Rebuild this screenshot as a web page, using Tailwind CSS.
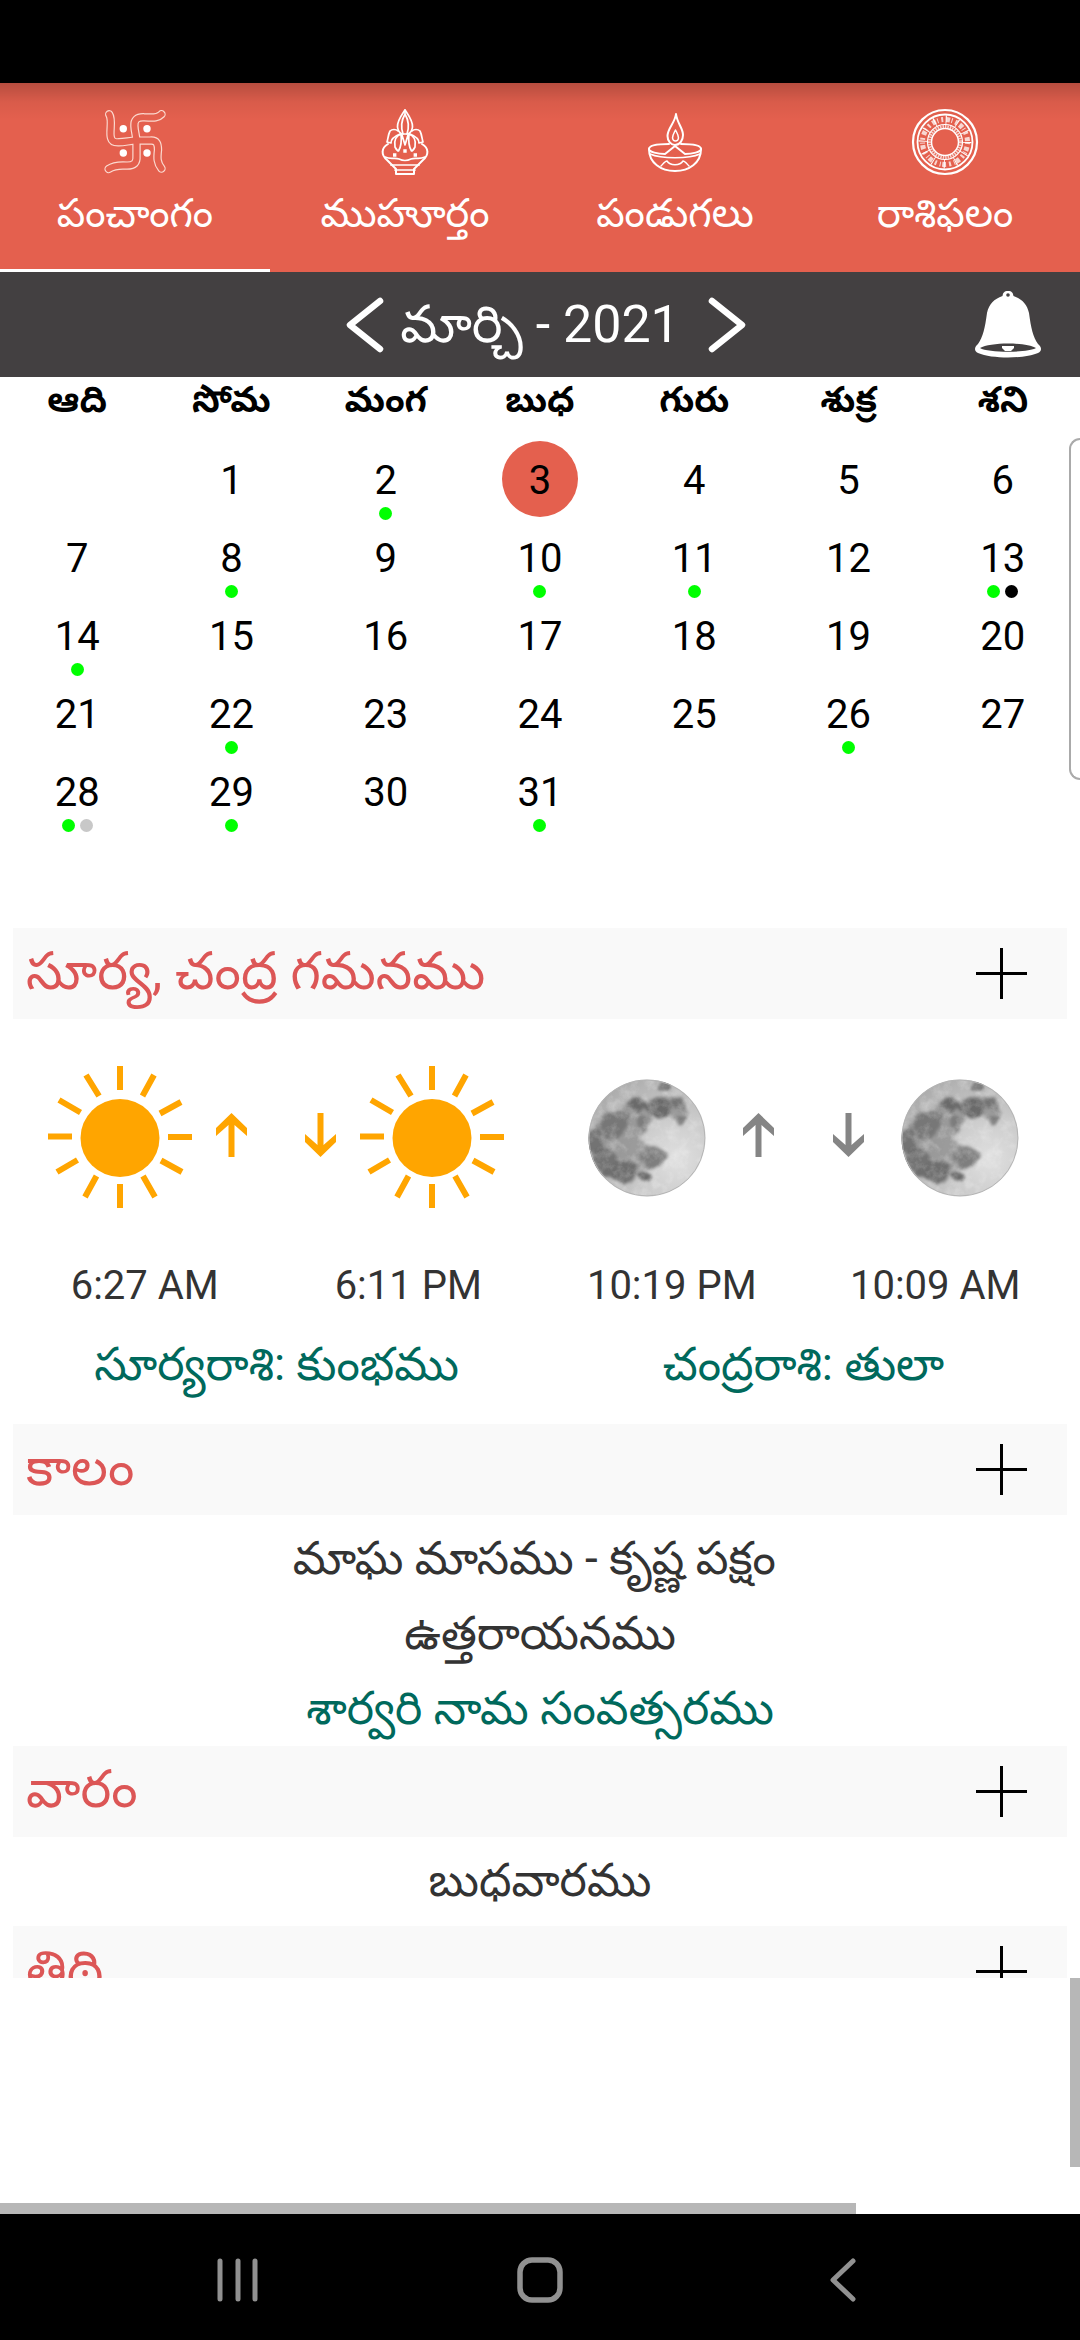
<!DOCTYPE html>
<html lang="te">

<head>
  <meta charset="UTF-8" />
  <meta name="viewport" content="width=device-width, initial-scale=1.0">
  <title>పంచాంగం</title>
  <script src="https://cdn.jsdelivr.net/npm/@tailwindcss/browser@4"></script>
</head>

<body class="relative min-h-screen flex flex-col bg-white text-black text-[40px] font-[Roboto,'Noto_Sans_Telugu','Noto_Sans',sans-serif]">
  <!-- status bar -->
  <div class="h-[83px] bg-black"></div>

  <!-- tabs -->
  <nav class="grid grid-cols-4 bg-[#e4604e] bg-linear-to-b from-black/20 via-black/5 via-10% to-transparent to-20% text-white leading-[56px]">
    <a href="#" class="flex flex-col items-center h-[189px] pt-[23px] border-b-[3px] border-white">
      <svg class="h-[71px] w-[70px]" viewBox="0 0 70 71" fill="none" stroke-linecap="round" stroke-linejoin="round">
        <g stroke="#fbd9cf" stroke-width="8.4">
          <path d="M9.2 8.3C13 14 9 26 11 32C12 36 15 36.5 19 36.3C25 36.3 30 34.6 36 34.6H50C57 34 58 38 58 44C57 52 57 57 61.5 62.5" />
          <path d="M61.5 8.3C57 13 51 11.3 44 11.3C37 11 34 14 34.4 20C34.6 26 36.5 30 36.5 36V50C37 57 34 59.6 27 59.6C19 59 13 60 8.6 63" />
        </g>
        <g stroke="#e4604e" stroke-width="6">
          <path d="M9.2 8.3C13 14 9 26 11 32C12 36 15 36.5 19 36.3C25 36.3 30 34.6 36 34.6H50C57 34 58 38 58 44C57 52 57 57 61.5 62.5" />
          <path d="M61.5 8.3C57 13 51 11.3 44 11.3C37 11 34 14 34.4 20C34.6 26 36.5 30 36.5 36V50C37 57 34 59.6 27 59.6C19 59 13 60 8.6 63" />
        </g>
        <g fill="#fff">
          <circle cx="23.3" cy="22.7" r="3.7" />
          <circle cx="47" cy="22.7" r="3.7" />
          <circle cx="23.3" cy="47" r="3.7" />
          <circle cx="47" cy="47" r="3.7" />
        </g>
      </svg>
      <span class="mt-[9px]">పంచాంగం</span>
    </a>
    <a href="#" class="flex flex-col items-center h-[189px] pt-[23px]">
      <svg class="h-[71px] w-[50px]" viewBox="0 0 50 71" fill="none" stroke="#fff" stroke-width="1.7" stroke-linejoin="round" stroke-linecap="round">
        <path d="M25 4C21 10 17 15 17.5 21C18 25 20 27 22 28H28C30 27 32 25 32.5 21C33 15 29 10 25 4Z" />
        <path d="M25 8C21 15 21 22 23 28M25 8C29 15 29 22 27 28M25 4V9" />
        <path d="M18 25C16 23 12 23 10 25C8 29 8 33 7 36L11 37C11 33 15 30 20 28M32 25C34 23 38 23 40 25C42 29 42 33 43 36L39 37C39 33 35 30 30 28" />
        <path d="M21 28C15 30 14 35 15 41C16 43 18 45 18.5 45C21 41 22 37 21 28ZM29 28C35 30 36 35 35 41C34 43 32 45 31.5 45C29 41 28 37 29 28ZM22 29L25 39L28 29" />
        <path stroke-width="2" d="M8 38C1 42 1 49 7 54L16 63V68H34V63L43 54C49 49 49 42 42 38" />
        <path d="M5 51C12 54 14 51 19 53C23 55 27 55 31 53C36 51 38 54 45 51M11 59H39M15 64H35" />
        <path stroke-width="3.4" stroke-linecap="butt" d="M13 49H16.4M23.3 45H26.7M33.6 49H37" />
      </svg>
      <span class="mt-[9px]">ముహూర్తం</span>
    </a>
    <a href="#" class="flex flex-col items-center h-[189px] pt-[23px]">
      <svg class="h-[71px] w-[60px]" viewBox="0 0 60 71" fill="none" stroke="#fff" stroke-width="2" stroke-linejoin="round" stroke-linecap="round">
        <path d="M31 8C30 17 22.5 22 22.5 30C22.5 35 26 39 30 39C35 39 38 34 38 29C38 22 32 17 31 8Z" />
        <path stroke-width="1.5" d="M30.5 24C29 27 27.5 29 27.5 32C28 36 33 36 33.5 32C33.5 29 32 27 30.5 24Z" />
        <path d="M24 38C15 38 4 39 4 43C4 46 13 48 20 48L30 40L40 48C47 48 56 46 56 43C56 39 45 38 36 38" />
        <path d="M4 43C4 57 16 65 30 65C44 65 56 57 56 43" />
        <path stroke-width="1.5" d="M5 48C16 53 44 53 55 48M16 60C18 58 20 55 22 55C25 60 35 60 38 55C40 55 42 58 44 60" />
      </svg>
      <span class="mt-[9px]">పండుగలు</span>
    </a>
    <a href="#" class="flex flex-col items-center h-[189px] pt-[23px]">
      <svg class="h-[71px] w-[70px]" viewBox="0 0 70 71" fill="none" stroke="#fff">
        <circle cx="35" cy="36" r="32" stroke-width="2.2" />
        <circle cx="35" cy="36" r="27.5" stroke-width="1.8" />
        <circle cx="35" cy="36" r="22.5" stroke-width="5" stroke-opacity=".75" stroke-dasharray="2 3 4 1.5 1 3" />
        <circle cx="35" cy="36" r="22" stroke-width="9" stroke-dasharray="1 10.52" />
        <circle cx="35" cy="36" r="17.5" stroke-width="1.2" />
        <circle cx="35" cy="36" r="15.5" stroke-width="3" stroke-opacity=".7" stroke-dasharray="1.5 1" />
        <circle cx="35" cy="36" r="13.5" stroke-width="1.5" />
      </svg>
      <span class="mt-[9px]">రాశిఫలం</span>
    </a>
  </nav>

  <!-- month switcher -->
  <header class="relative flex items-center justify-center gap-4 h-[105px] bg-[#434041] text-white text-[52px] leading-[72px] pl-[12px]">
    <button aria-label="Previous month">
      <svg class="w-[38px] h-[60px]" viewBox="0 0 38 60" fill="none" stroke="#fff" stroke-width="6.5" stroke-linecap="round" stroke-linejoin="round"><path d="M34 6L4 30L34 54" /></svg>
    </button>
    <h1>మార్చి - 2021</h1>
    <button class="ml-3" aria-label="Next month">
      <svg class="w-[38px] h-[60px]" viewBox="0 0 38 60" fill="none" stroke="#fff" stroke-width="6.5" stroke-linecap="round" stroke-linejoin="round"><path d="M4 6L34 30L4 54" /></svg>
    </button>
    <button class="absolute right-[38px] top-[18px]" aria-label="Reminders">
      <svg class="w-[68px] h-[68px]" viewBox="0 0 68 68" fill="#fff">
        <path d="M34 1C30 1 29 3 28.5 6C20 9 15 14 13 23C11 38 9 47 4 54C0 57 0 61 4 63C18 69 50 69 64 63C68 61 68 57 64 54C59 47 57 38 55 23C53 14 48 9 39.5 6C39 3 38 1 34 1Z" />
        <path fill="#434041" d="M6 58C16 52 52 52 62 58C54 63 14 63 6 58Z" />
        <path d="M28 56H40V58L37 61H31L28 58Z" />
        <circle cx="34" cy="5" r="1.8" fill="#434041" />
      </svg>
    </button>
  </header>

  <!-- calendar -->
  <table class="w-full table-fixed text-center leading-[48px]">
    <thead>
      <tr class="h-[63px] align-top text-[36px] leading-[46px]">
        <th>ఆది</th><th>సోమ</th><th>మంగ</th><th>బుధ</th><th>గురు</th><th>శుక్ర</th><th>శని</th>
      </tr>
    </thead>
    <tbody id="days"></tbody>
  </table>

  <main class="mt-[98px] px-[13px] text-[#333]">
    <section>
      <div class="flex items-center justify-between h-[91px] pl-[13px] pr-[40px] bg-[#f9f9f9]">
        <h2 class="text-[#dc5656] text-[52px] leading-[64px] pb-[4px]">సూర్య, చంద్ర గమనము</h2>
        <button aria-label="Expand" class="text-black">
          <svg class="w-[51px] h-[51px]" viewBox="0 0 51 51" stroke="currentColor" stroke-width="3"><path d="M25.5 0V51M0 25.5H51" /></svg>
        </button>
      </div>
      <div class="grid grid-cols-2 pt-[46px] h-[206px]">
        <div class="flex items-start justify-between pl-[35px] pr-[36px] text-[#ffa500]">
          <svg class="w-[144px] h-[144px]" viewBox="0 0 144 144"><use href="#sun" /></svg>
          <svg class="w-[31px] h-[44px] mt-[48px]" viewBox="0 0 31 44"><use href="#arrow" /></svg>
          <svg class="w-[31px] h-[44px] mt-[48px] ml-[34px] rotate-180" viewBox="0 0 31 44"><use href="#arrow" /></svg>
          <svg class="w-[144px] h-[144px]" viewBox="0 0 144 144"><use href="#sun" /></svg>
        </div>
        <div class="flex items-start justify-between pl-[48px] pr-[48px] text-[#858585]">
          <svg class="w-[118px] h-[118px] mt-[14px]" viewBox="0 0 118 118"><use href="#moon" /></svg>
          <svg class="w-[31px] h-[44px] mt-[48px]" viewBox="0 0 31 44"><use href="#arrow" /></svg>
          <svg class="w-[31px] h-[44px] mt-[48px] ml-[22px] rotate-180" viewBox="0 0 31 44"><use href="#arrow" /></svg>
          <svg class="w-[118px] h-[118px] mt-[14px]" viewBox="0 0 118 118"><use href="#moon" /></svg>
        </div>
      </div>
      <div class="grid grid-cols-4 pt-[37px] text-center leading-[48px]">
        <p>6:27 AM</p>
        <p>6:11 PM</p>
        <p>10:19 PM</p>
        <p>10:09 AM</p>
      </div>
      <div class="grid grid-cols-2 h-[114px] pt-[24px] text-center text-[#00695c] text-[46px] leading-[60px]">
        <p>సూర్యరాశి: కుంభము</p>
        <p>చంద్రరాశి: తులా</p>
      </div>
    </section>

    <section>
      <div class="flex items-center justify-between h-[91px] pl-[13px] pr-[40px] bg-[#f9f9f9]">
        <h2 class="text-[#dc5656] text-[52px] leading-[64px] pb-[4px]">కాలం</h2>
        <button aria-label="Expand" class="text-black">
          <svg class="w-[51px] h-[51px]" viewBox="0 0 51 51" stroke="currentColor" stroke-width="3"><path d="M25.5 0V51M0 25.5H51" /></svg>
        </button>
      </div>
      <div class="h-[231px] pt-[6px] text-center text-[46px] leading-[75px]">
        <p>మాఘ మాసము - కృష్ణ పక్షం&nbsp;</p>
        <p>ఉత్తరాయనము</p>
        <p class="text-[#00695c]">శార్వరి నామ సంవత్సరము</p>
      </div>
    </section>

    <section>
      <div class="flex items-center justify-between h-[91px] pl-[13px] pr-[40px] bg-[#f9f9f9]">
        <h2 class="text-[#dc5656] text-[52px] leading-[64px] pb-[4px]">వారం</h2>
        <button aria-label="Expand" class="text-black">
          <svg class="w-[51px] h-[51px]" viewBox="0 0 51 51" stroke="currentColor" stroke-width="3"><path d="M25.5 0V51M0 25.5H51" /></svg>
        </button>
      </div>
      <div class="h-[89px] pt-[6px] text-center text-[46px] leading-[75px]">
        <p>బుధవారము</p>
      </div>
    </section>

    <section class="h-[52px] overflow-hidden">
      <div class="flex items-center justify-between h-[91px] pl-[13px] pr-[40px] bg-[#f9f9f9]">
        <h2 class="text-[#dc5656] text-[52px] leading-[64px] pb-[4px]">తిథి</h2>
        <button aria-label="Expand" class="text-black">
          <svg class="w-[51px] h-[51px]" viewBox="0 0 51 51" stroke="currentColor" stroke-width="3"><path d="M25.5 0V51M0 25.5H51" /></svg>
        </button>
      </div>
    </section>
  </main>

  <!-- empty ad area with its scrollbars -->
  <div class="flex-1 flex flex-col justify-between">
    <div class="self-end w-[10px] h-[189px] bg-[#b7b7b7]"></div>
    <div class="w-[856px] h-[11px] bg-[#b7b7b7]"></div>
  </div>

  <!-- system navigation -->
  <footer class="grid grid-cols-3 h-[126px] bg-black px-[86px] pt-[6px]">
    <button class="flex items-center justify-center" aria-label="Recents">
      <svg class="w-[44px] h-[44px]" viewBox="0 0 44 44" stroke="#919191" stroke-width="5" stroke-linecap="round"><path d="M5 3V41M23 3V41M40 3V41" /></svg>
    </button>
    <button class="flex items-center justify-center" aria-label="Home">
      <svg class="w-[46px] h-[46px]" viewBox="0 0 46 46" fill="none" stroke="#919191" stroke-width="5.5"><rect x="3" y="3" width="40" height="40" rx="12" /></svg>
    </button>
    <button class="flex items-center justify-center" aria-label="Back">
      <svg class="w-[28px] h-[44px]" viewBox="0 0 28 44" fill="none" stroke="#919191" stroke-width="5" stroke-linecap="round" stroke-linejoin="round"><path d="M24 3L4 22L24 41" /></svg>
    </button>
  </footer>

  <!-- edge panel handle -->
  <div class="absolute right-0 top-[438px] w-[11px] h-[342px] border-2 border-r-0 border-[#aaa] rounded-l-[12px] bg-white"></div>

  <!-- shared shapes -->
  <svg class="absolute w-0 h-0" aria-hidden="true">
    <defs>
      <g id="sun">
        <ellipse cx="72" cy="73" rx="39.5" ry="39" fill="currentColor" />
        <path fill="none" stroke="currentColor" stroke-width="6" d="M72 1V25M106 10L94.5 31M133 37L112 48.5M144 72H120M134 107L113 95.5M107 132L95 111M72 143V119M37 132L48.5 111M9 107L29.5 95M0 71.5H24M11 35L32.5 47.5M38 10L51 31" />
      </g>
      <path id="arrow" fill="currentColor" d="M15.5 0L31 15V23L18.5 12V44H12.5V12L0 23V15Z" />
      <clipPath id="disc"><circle cx="59" cy="59" r="58.5" /></clipPath>
      <radialGradient id="moonBase" cx=".75" cy=".68" r=".85">
        <stop offset="0" stop-color="#e0e0e0" />
        <stop offset=".45" stop-color="#cacaca" />
        <stop offset="1" stop-color="#a8a8a8" />
      </radialGradient>
      <filter id="ragged" x="-20%" y="-20%" width="140%" height="140%">
        <feTurbulence type="fractalNoise" baseFrequency=".06" numOctaves="5" seed="4" result="n" />
        <feDisplacementMap in="SourceGraphic" in2="n" scale="12" xChannelSelector="R" yChannelSelector="G" />
        <feGaussianBlur stdDeviation="1.8" />
      </filter>
      <filter id="grain" x="0" y="0" width="100%" height="100%">
        <feTurbulence type="fractalNoise" baseFrequency=".1" numOctaves="5" seed="21" />
        <feColorMatrix values="0 0 0 0 1  0 0 0 0 1  0 0 0 0 1  2 0 0 0 -.8" />
      </filter>
      <g id="moon" clip-path="url(#disc)">
        <rect width="118" height="118" fill="url(#moonBase)" />
        <g filter="url(#ragged)">
          <path fill="#8f8f8f" d="M12 40L20 32L34 32L42 20L66 20L84 18L100 26L100 40L90 42L76 34L62 38L58 50L50 58L58 68L74 68L78 80L68 88L56 90L44 104L34 102L16 96L-4 80V56Z" opacity=".8" />
          <g fill="#6a6a6a">
            <ellipse cx="50" cy="26" rx="11" ry="8" />
            <ellipse cx="71" cy="29" rx="11" ry="9" />
            <ellipse cx="91" cy="24" rx="9" ry="7" opacity=".8" />
            <ellipse cx="76" cy="9" rx="7" ry="5" />
            <ellipse cx="93" cy="41" rx="5" ry="4" opacity=".7" />
            <ellipse cx="26" cy="45" rx="15" ry="14" opacity=".7" />
            <ellipse cx="54" cy="43" rx="5" ry="8" opacity=".6" />
            <ellipse cx="6" cy="64" rx="9" ry="14" opacity=".8" />
            <ellipse cx="16" cy="80" rx="14" ry="10" opacity=".8" />
            <ellipse cx="32" cy="92" rx="17" ry="10" opacity=".9" />
            <ellipse cx="65" cy="78" rx="12" ry="10" opacity=".6" />
            <ellipse cx="57" cy="97" rx="6" ry="5" />
          </g>
        </g>
        <rect width="118" height="118" filter="url(#grain)" opacity=".28" />
        <circle cx="59" cy="59" r="58" fill="none" stroke="#b4b4b4" />
      </g>
    </defs>
  </svg>

  <script>
    const FIRST_WEEKDAY = 1; // March 2021 starts on a Monday
    const TODAY = 3;
    const GREEN = "bg-[#00ff00]";
    const events = {
      2: [GREEN], 8: [GREEN], 10: [GREEN], 11: [GREEN],
      13: [GREEN, "bg-black"], 14: [GREEN], 22: [GREEN], 26: [GREEN],
      28: [GREEN, "bg-[#c8c8c8]"], 29: [GREEN], 31: [GREEN]
    };

    const days = document.getElementById("days");
    for (let week = 0; week < 5; week++) {
      const row = document.createElement("tr");
      for (let col = 0; col < 7; col++) {
        const day = week * 7 + col - FIRST_WEEKDAY + 1;
        const cell = document.createElement("td");
        cell.className = "h-[78px] p-0";
        if (day > 0 && day <= 31) {
          const dots = (events[day] || []).map(c => `<span class="w-[13px] h-[13px] rounded-full ${c}"></span>`).join("");
          const circle = day === TODAY ? "bg-[#e4604e]" : "";
          cell.innerHTML = `
            <button class="relative w-[76px] h-[76px] rounded-full align-top ${circle}">
              <span class="block pt-[4px]">${day}</span>
              <span class="absolute inset-x-0 bottom-[-3px] flex justify-center gap-[5px]">${dots}</span>
            </button>`;
        }
        row.appendChild(cell);
      }
      days.appendChild(row);
    }
  </script>
</body>

</html>
